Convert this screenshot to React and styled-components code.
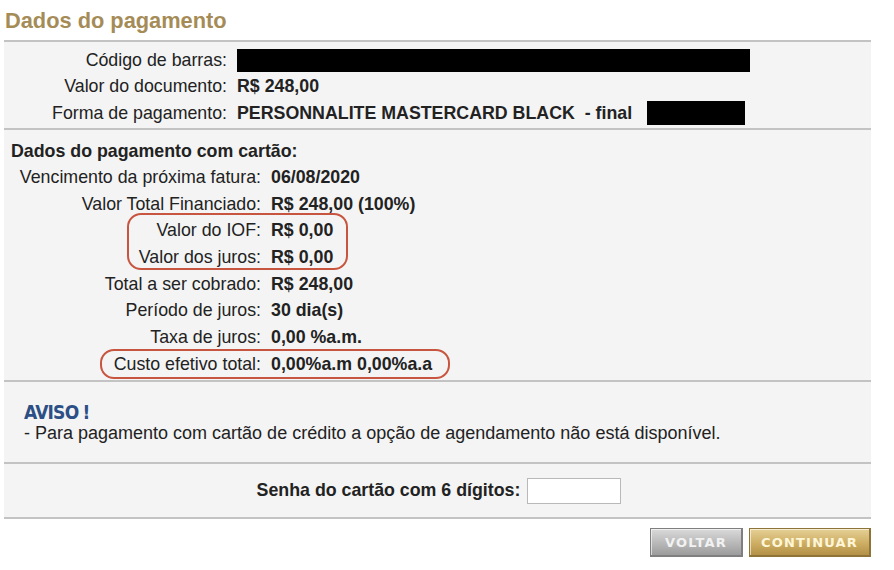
import React from "react";
import styled, { createGlobalStyle } from "styled-components";

const GlobalStyle = createGlobalStyle`
  html, body {
    margin: 0;
    padding: 0;
    background: #ffffff;
    font-family: "Liberation Sans", Arial, sans-serif;
    color: #222;
  }
`;

const Page = styled.div`
  width: 894px;
  height: 570px;
  padding: 0 23px 0 4px;
  box-sizing: border-box;
`;

const Title = styled.h1`
  margin: 0;
  padding: 9px 0 0 1px;
  height: 40px;
  box-sizing: border-box;
  font-size: 21.8px;
  font-weight: 700;
  color: #a58c57;
  line-height: 24px;
`;

const Section = styled.section`
  position: relative;
  background: #f4f4f4;
  border-top: 2px solid #c3c3c3;
  padding: ${(p) => p.$pad || "0"};
  height: ${(p) => p.$h}px;
  box-sizing: border-box;
`;

const Rows = styled.div`
  display: grid;
  grid-template-columns: ${(p) => p.$label}px 1fr;
  column-gap: 10px;
  grid-auto-rows: ${(p) => p.$row}px;
  align-items: center;
  font-size: 17.8px;
`;

const Label = styled.div`
  text-align: right;
  white-space: nowrap;
`;

const Value = styled.div`
  font-weight: 700;
  white-space: nowrap;
  display: flex;
  align-items: center;
`;

const Redact = styled.span`
  display: inline-block;
  background: #000;
  width: ${(p) => p.$w}px;
  height: ${(p) => p.$h || 23}px;
  margin-left: ${(p) => p.$ml || 0}px;
`;

const Heading = styled.div`
  font-size: 17.8px;
  font-weight: 700;
  padding-left: 7px;
  height: 26px;
  line-height: 26px;
`;

const Ring = styled.div`
  position: absolute;
  border: 2px solid #c8553f;
  border-radius: 14px;
  left: ${(p) => p.$x}px;
  top: ${(p) => p.$y}px;
  width: ${(p) => p.$w}px;
  height: ${(p) => p.$h}px;
  box-sizing: border-box;
  pointer-events: none;
`;

const Aviso = styled.div`
  padding: 20px 0 0 20px;
`;

const AvisoTitle = styled.div`
  font-family: "DejaVu Sans Condensed", "DejaVu Sans", sans-serif;
  font-weight: 700;
  font-size: 19px;
  color: #2c4f86;
  letter-spacing: -0.8px;
  line-height: 21px;
  word-spacing: -1px;
`;

const AvisoText = styled.div`
  font-size: 18px;
  line-height: 20px;
  color: #222;
`;

const SenhaRow = styled.div`
  display: flex;
  justify-content: center;
  align-items: center;
  gap: 7px;
  height: 100%;
  padding-left: 3px;
  font-size: 17.8px;
  font-weight: 700;
`;

const Input = styled.input`
  width: 94px;
  height: 26px;
  box-sizing: border-box;
  border: 1px solid #b9b9b9;
  background: #fff;
`;

const BottomLine = styled.div`
  border-top: 2px solid #c3c3c3;
`;

const Buttons = styled.div`
  display: flex;
  justify-content: flex-end;
  gap: 6px;
  padding-top: 9px;
`;

const Btn = styled.button`
  height: 29px;
  width: ${(p) => p.$w}px;
  border: 1px solid ${(p) => (p.$gold ? "#8e7436" : "#7f7f7f")};
  border-right-width: 2px;
  border-bottom-width: 2px;
  background: ${(p) =>
    p.$gold
      ? "linear-gradient(#e6d096, #cdae63 55%, #b39146)"
      : "linear-gradient(#dadada, #b8b8b8 55%, #9c9c9c)"};
  box-shadow: inset 1px 1px 0 rgba(255, 255, 255, 0.6);
  color: ${(p) => (p.$gold ? "#fff6d8" : "#f2f2f2")};
  font-family: "DejaVu Sans", sans-serif;
  font-weight: 700;
  font-size: 13px;
  letter-spacing: 1.2px;
  padding: 0;
`;

export default function App() {
  return (
    <>
      <GlobalStyle />
      <Page>
        <Title>Dados do pagamento</Title>
        <Section $h={88} $pad="5px 0 0 0">
          <Rows $label={223} $row={26.5}>
            <Label>Código de barras:</Label>
            <Value>
              <Redact $w={513} />
            </Value>
            <Label>Valor do documento:</Label>
            <Value>R$ 248,00</Value>
            <Label>Forma de pagamento:</Label>
            <Value>
              PERSONNALITE MASTERCARD BLACK&nbsp;&nbsp;- final
              <Redact $w={98} $h={24} $ml={15} />
            </Value>
          </Rows>
        </Section>
        <Section $h={252} $pad="8px 0 0 0">
          <Heading>Dados do pagamento com cartão:</Heading>
          <Rows $label={257} $row={26.7}>
            <Label>Vencimento da próxima fatura:</Label>
            <Value>06/08/2020</Value>
            <Label>Valor Total Financiado:</Label>
            <Value>R$ 248,00 (100%)</Value>
            <Label>Valor do IOF:</Label>
            <Value>R$ 0,00</Value>
            <Label>Valor dos juros:</Label>
            <Value>R$ 0,00</Value>
            <Label>Total a ser cobrado:</Label>
            <Value>R$ 248,00</Value>
            <Label>Período de juros:</Label>
            <Value>30 dia(s)</Value>
            <Label>Taxa de juros:</Label>
            <Value>0,00 %a.m.</Value>
            <Label>Custo efetivo total:</Label>
            <Value>0,00%a.m 0,00%a.a</Value>
          </Rows>
          <Ring $x={123} $y={83} $w={221} $h={57} />
          <Ring $x={96} $y={219} $w={350} $h={30} />
        </Section>
        <Section $h={82}>
          <Aviso>
            <AvisoTitle>AVISO !</AvisoTitle>
            <AvisoText>
              - Para pagamento com cartão de crédito a opção de agendamento não está disponível.
            </AvisoText>
          </Aviso>
        </Section>
        <Section $h={55}>
          <SenhaRow>
            Senha do cartão com 6 dígitos:
            <Input type="password" />
          </SenhaRow>
        </Section>
        <BottomLine />
        <Buttons>
          <Btn $w={93}>VOLTAR</Btn>
          <Btn $w={122} $gold>
            CONTINUAR
          </Btn>
        </Buttons>
      </Page>
    </>
  );
}
